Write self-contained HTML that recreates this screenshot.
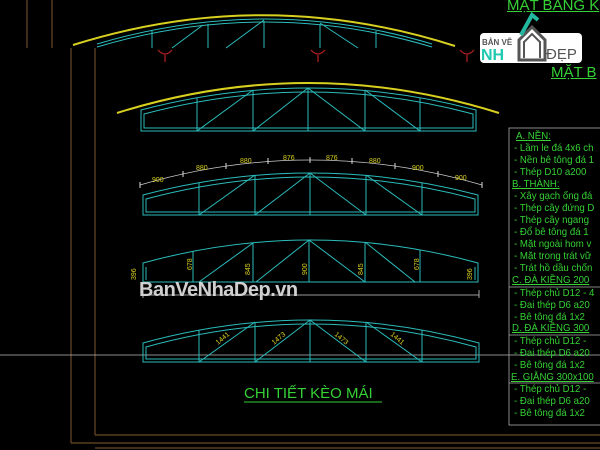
<!DOCTYPE html>
<html><head><meta charset="utf-8"><style>
body{margin:0;background:#000;width:600px;height:450px;overflow:hidden;position:relative;font-family:"Liberation Sans","DejaVu Sans",sans-serif}
.t{position:absolute;color:#35d135;font-size:10.5px;white-space:nowrap;transform:scaleX(.92);transform-origin:left}
</style></head><body>
<svg width="600" height="450" style="position:absolute;left:0;top:0" fill="none">
<g stroke="#6b4a2a" stroke-width="1.2">
<line x1="27" y1="0" x2="27" y2="48"/><line x1="52" y1="0" x2="52" y2="48"/>
<line x1="71" y1="48" x2="71" y2="443"/><line x1="95" y1="48" x2="95" y2="435"/>
<line x1="95" y1="435" x2="600" y2="435"/><line x1="71" y1="443" x2="600" y2="443"/>
<line x1="95" y1="448" x2="600" y2="448"/>
</g>
<line x1="0" y1="355" x2="600" y2="355" stroke="#bbb" stroke-width="0.8"/>
<!-- truss1 -->
<path d="M73 45 Q264 -15 455 46" stroke="#d8d020" stroke-width="2"/>
<g stroke="#2cbcbc" stroke-width="1">
<path d="M97 47 Q265 -3 432 47"/><path d="M97 44 Q265 -6 432 44"/>
<line x1="152" y1="31" x2="152" y2="48"/><line x1="208" y1="24" x2="208" y2="48"/><line x1="264" y1="21" x2="264" y2="48"/><line x1="320" y1="24" x2="320" y2="48"/><line x1="376" y1="31" x2="376" y2="48"/>
<line x1="226" y1="48" x2="264" y2="20"/><line x1="172" y1="48" x2="203" y2="25"/><line x1="320" y1="23" x2="358" y2="48"/>
</g>
<g stroke="#b02020" stroke-width="1.3"><path d="M158 50 Q165 58 172 50M165 55V62"/><path d="M311 50 Q318 58 325 50M318 55V62"/><path d="M460 50 Q467 58 474 50M467 55V62"/></g>
<!-- truss2 -->
<path d="M117 113 Q308 53 499 113" stroke="#d8d020" stroke-width="2"/>
<g stroke="#2cbcbc" stroke-width="1">
<path d="M141 110 Q308.5 66 476 110 V131 H141 Z"/><path d="M144 114 Q308.5 70 473 114 V128 H144 Z"/>
<line x1="197" y1="98" x2="197" y2="131"/><line x1="253" y1="90" x2="253" y2="131"/><line x1="308" y1="88" x2="308" y2="131"/><line x1="365" y1="90" x2="365" y2="131"/><line x1="420" y1="98" x2="420" y2="131"/>
<line x1="197" y1="131" x2="253" y2="90"/><line x1="253" y1="131" x2="308" y2="88"/><line x1="308" y1="88" x2="365" y2="131"/><line x1="365" y1="90" x2="420" y2="131"/>
</g>
<!-- truss3 -->
<path d="M140 185 Q310 135 482 185" stroke="#ccc" stroke-width="0.8"/>
<g stroke="#ddd" stroke-width="1"><path d="M140 182v6M183 171v6M226 163v6M268 158v6M310 157v6M352 158v6M395 163v6M438 171v6M482 182v6"/></g>
<g stroke="#2cbcbc" stroke-width="1">
<path d="M143 195 Q310.5 151 478 195 V215 H143 Z"/><path d="M146 199 Q310.5 155 475 199 V212 H146 Z"/>
<line x1="199" y1="183" x2="199" y2="215"/><line x1="255" y1="175" x2="255" y2="215"/><line x1="310" y1="173" x2="310" y2="215"/><line x1="366" y1="175" x2="366" y2="215"/><line x1="422" y1="183" x2="422" y2="215"/>
<line x1="199" y1="215" x2="255" y2="175"/><line x1="255" y1="215" x2="310" y2="173"/><line x1="310" y1="173" x2="366" y2="215"/><line x1="366" y1="175" x2="422" y2="215"/>
</g>
<g fill="#d8d020" font-size="7" font-family="Liberation Sans">
<text x="152" y="182">900</text><text x="196" y="170">880</text><text x="240" y="163">880</text><text x="283" y="160">876</text><text x="326" y="160">876</text><text x="369" y="163">880</text><text x="412" y="170">900</text><text x="455" y="180">900</text>
</g>
<!-- truss4 -->
<g stroke="#2cbcbc" stroke-width="1">
<path d="M143 263 Q310.5 217 478 263 V282 H143 Z"/><line x1="146" y1="267" x2="146" y2="280"/><line x1="475" y1="267" x2="475" y2="280"/>
<line x1="193" y1="251" x2="193" y2="282"/><line x1="253" y1="243" x2="253" y2="282"/><line x1="309" y1="240" x2="309" y2="282"/><line x1="365" y1="242" x2="365" y2="282"/><line x1="420" y1="250" x2="420" y2="282"/>
<line x1="199" y1="282" x2="253" y2="243"/><line x1="256" y1="282" x2="309" y2="240"/><line x1="309" y1="240" x2="365" y2="282"/><line x1="365" y1="242" x2="415" y2="282"/>
</g>
<line x1="143" y1="295" x2="479" y2="295" stroke="#ccc" stroke-width="0.8"/>
<path d="M143 290v8M479 290v8" stroke="#ccc" stroke-width="0.8"/>
<g fill="#d8d020" font-size="7"><text transform="translate(136,280) rotate(-90)">396</text><text transform="translate(192,270) rotate(-90)">678</text><text transform="translate(250,275) rotate(-90)">845</text><text transform="translate(307,275) rotate(-90)">900</text><text transform="translate(363,275) rotate(-90)">845</text><text transform="translate(419,270) rotate(-90)">678</text><text transform="translate(472,280) rotate(-90)">396</text></g>
<!-- truss5 -->
<g stroke="#2cbcbc" stroke-width="1">
<path d="M143 343 Q311 297 479 343 V362 H143 Z"/><path d="M146 347 Q311 301 476 347 V359 H146 Z"/>
<line x1="199" y1="330" x2="199" y2="362"/><line x1="255" y1="322" x2="255" y2="362"/><line x1="310" y1="320" x2="310" y2="362"/><line x1="366" y1="322" x2="366" y2="362"/><line x1="422" y1="330" x2="422" y2="362"/>
<line x1="199" y1="362" x2="255" y2="322"/><line x1="255" y1="362" x2="310" y2="320"/><line x1="310" y1="320" x2="366" y2="362"/><line x1="366" y1="322" x2="422" y2="362"/>
</g>
<g fill="#d8d020" font-size="7"><text transform="translate(218,345) rotate(-40)">1441</text><text transform="translate(274,345) rotate(-40)">1473</text><text transform="translate(334,335) rotate(40)">1473</text><text transform="translate(390,335) rotate(40)">1441</text></g>
<!-- notes box -->
<rect x="509" y="128" width="100" height="297" stroke="#aaa" stroke-width="0.8"/>
<line x1="509" y1="287" x2="600" y2="287" stroke="#aaa" stroke-width="0.8"/>
<line x1="509" y1="335" x2="600" y2="335" stroke="#aaa" stroke-width="0.8"/>
<line x1="509" y1="383" x2="600" y2="383" stroke="#aaa" stroke-width="0.8"/>
<line x1="244" y1="402" x2="382" y2="402" stroke="#35d135"/>
<!-- logo -->
<rect x="480" y="33" width="102" height="30" rx="4" fill="#fff"/>
<path d="M519 60 V40 L532 27 L545 40 V60 Z" fill="#fff" stroke="#555" stroke-width="3"/>
<path d="M524 58 V42 L532 34 L540 42 V58" fill="none" stroke="#555" stroke-width="2"/>
<path d="M521 35 L532 15 L538 20" stroke="#22b8a0" stroke-width="4"/>
<text x="482" y="45" font-size="8" font-weight="bold" fill="#555">BẢN VẼ</text>
<text x="481" y="60" font-size="16" font-weight="bold" fill="#1ec9b0">NH</text>
<text x="546" y="59" font-size="15" fill="#555">ĐẸP</text>
</svg>
<div style="position:absolute;left:507px;top:-3px;color:#35d135;font-size:15px;text-decoration:underline;white-space:nowrap">MẶT BẰNG K</div>
<div style="position:absolute;left:551px;top:64px;color:#35d135;font-size:15px;text-decoration:underline;white-space:nowrap">MẶT B</div>
<div style="position:absolute;left:139px;top:279px;color:#d0d0d0;font-size:20px;font-weight:bold;letter-spacing:-0.5px">BanVeNhaDep.vn</div>
<div style="position:absolute;left:244px;top:385px;color:#35d135;font-size:15px;white-space:nowrap">CHI TIẾT KÈO MÁI</div>
<div class="t" style="left:516px;top:130px;text-decoration:underline">A. NỀN:</div>
<div class="t" style="left:514px;top:142px">- Lầm le đá 4x6 ch</div>
<div class="t" style="left:514px;top:154px">- Nền bê tông đá 1</div>
<div class="t" style="left:514px;top:166px">-  Thép D10 a200</div>
<div class="t" style="left:512px;top:178px;text-decoration:underline">B. THÀNH:</div>
<div class="t" style="left:514px;top:190px">- Xây gạch ống đá</div>
<div class="t" style="left:514px;top:202px">- Thép cây đứng D</div>
<div class="t" style="left:514px;top:214px">- Thép cây ngang</div>
<div class="t" style="left:514px;top:226px">- Đổ bê tông đá 1</div>
<div class="t" style="left:514px;top:238px">- Mặt ngoài hom v</div>
<div class="t" style="left:514px;top:250px">- Mặt trong trát vữ</div>
<div class="t" style="left:514px;top:262px">- Trát hồ dầu chốn</div>
<div class="t" style="left:512px;top:274px;text-decoration:underline">C. ĐÀ KIỀNG 200</div>
<div class="t" style="left:514px;top:287px">- Thép chủ D12 - 4</div>
<div class="t" style="left:514px;top:299px">- Đai thép D6 a20</div>
<div class="t" style="left:514px;top:311px">- Bê tông đá 1x2</div>
<div class="t" style="left:512px;top:322px;text-decoration:underline">D. ĐÀ KIỀNG 300</div>
<div class="t" style="left:514px;top:335px">- Thép chủ D12 -</div>
<div class="t" style="left:514px;top:347px">- Đai thép D6 a20</div>
<div class="t" style="left:514px;top:359px">- Bê tông đá 1x2</div>
<div class="t" style="left:511px;top:371px;text-decoration:underline">E. GIẰNG 300x100</div>
<div class="t" style="left:514px;top:383px">- Thép chủ D12 -</div>
<div class="t" style="left:514px;top:395px">- Đai thép D6 a20</div>
<div class="t" style="left:514px;top:407px">- Bê tông đá 1x2</div>
</body></html>
